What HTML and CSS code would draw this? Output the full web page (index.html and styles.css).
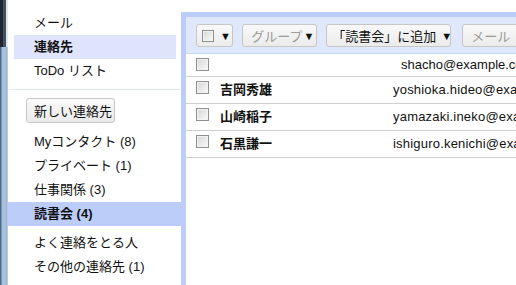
FILE: index.html
```html
<!DOCTYPE html>
<html lang="ja">
<head>
<meta charset="utf-8">
<title>連絡先</title>
<link rel="stylesheet" href="styles.css">
</head>
<body>
<div class="app">
  <div class="strip"><div class="strip-top"></div></div>
  <aside class="sidebar">
    <ul class="nav">
      <li class="nav-item">メール</li>
      <li class="nav-item is-active">連絡先</li>
      <li class="nav-item">ToDo リスト</li>
    </ul>
    <div class="sep"></div>
    <button class="btn btn-new" type="button">新しい連絡先</button>
    <ul class="groups">
      <li class="group-item">Myコンタクト (8)</li>
      <li class="group-item">プライベート (1)</li>
      <li class="group-item">仕事関係 (3)</li>
      <li class="group-item is-active">読書会 (4)</li>
    </ul>
    <ul class="groups groups-system">
      <li class="group-item">よく連絡をとる人</li>
      <li class="group-item">その他の連絡先 (1)</li>
    </ul>
  </aside>
  <main class="panel">
    <div class="toolbar">
      <button class="btn btn-select" type="button"><span class="cb"></span><span class="caret">▼</span></button>
      <button class="btn btn-group" type="button"><span class="disabled">グループ</span><span class="caret">▼</span></button>
      <button class="btn btn-add" type="button">「読書会」に追加<span class="caret caret-gap">▼</span></button>
      <button class="btn btn-mail disabled" type="button">メール</button>
    </div>
    <div class="list">
      <div class="row"><span class="cb row-cb"></span><span class="name"></span><span class="email email-self">shacho@example.com</span></div>
      <div class="row"><span class="cb row-cb"></span><span class="name">吉岡秀雄</span><span class="email">yoshioka.hideo@example.com</span></div>
      <div class="row"><span class="cb row-cb"></span><span class="name">山崎稲子</span><span class="email">yamazaki.ineko@example.com</span></div>
      <div class="row"><span class="cb row-cb"></span><span class="name">石黒謙一</span><span class="email">ishiguro.kenichi@example.com</span></div>
    </div>
  </main>
</div>
</body>
</html>
```
FILE: styles.css
```css
* { box-sizing: border-box; }
html, body { margin: 0; padding: 0; }
body {
  background: #fff;
  color: #111;
  font-family: "Liberation Sans", "Noto Sans CJK JP", sans-serif;
  font-size: 13px;
  overflow: hidden;
}
ul { list-style: none; margin: 0; padding: 0; }

.app {
  display: flex;
  height: 285px;
  overflow: hidden;
}

.strip {
  flex: none;
  width: 8px;
  background: linear-gradient(90deg, #4d6a88 0, #4d6a88 1px, #a5bfdc 2px, #a9c3df 6px, #8eaacb 7px, #dfe7ef 8px);
}
.strip-top {
  height: 47px;
  background: linear-gradient(90deg, #1d2733 0, #1d2733 3px, #46525f 3px, #46525f 6px, #d5dbe2 6px, #eef1f4 8px);
}

.sidebar {
  flex: none;
  width: 173px;
  padding-top: 11px;
}
.nav-item {
  height: 24px;
  line-height: 24px;
  margin: 0 5px 0 6px;
  padding-left: 20px;
  white-space: nowrap;
}
.nav-item.is-active {
  background: #dde4fb;
  font-weight: bold;
}
.sep {
  height: 1px;
  margin: 6px 1px 0 1px;
  background: #dfe7f1;
}
.btn {
  font-family: inherit;
  font-size: 13px;
  color: #111;
  height: 23px;
  padding: 0 8px;
  border: 1px solid #c6c6c6;
  border-radius: 3px;
  background: linear-gradient(#f9f9f9, #ebebeb);
  display: inline-flex;
  align-items: center;
  white-space: nowrap;
  cursor: default;
}
.btn-new {
  margin: 8px 0 0 18px;
  height: 25px;
  width: 89px;
  padding: 0 7px;
}
.groups { margin-top: 7px; }
.groups-system { margin-top: 5px; }
.group-item {
  height: 24px;
  line-height: 24px;
  padding-left: 26px;
  white-space: nowrap;
}
.group-item.is-active {
  background: #bccdfa;
  font-weight: bold;
}

.panel {
  flex: none;
  width: 340px;
  margin-top: 12px;
  border-top: 5px solid #bccdfa;
  border-left: 5px solid #bccdfa;
  background: #fff;
}
.toolbar {
  height: 37px;
  background: #e0e8fb;
  border-bottom: 1px solid #c6d3f3;
  display: flex;
  align-items: flex-start;
  gap: 9px;
  padding: 7px 0 0 10px;
}
.btn-select { width: 38px; padding: 0 0 0 5px; }
.btn-group { width: 75px; }
.btn-add { width: 125px; padding: 0 0 0 5px; }
.btn-mail { width: 60px; margin-left: 2px; }
.disabled { color: #9a9a9a; }
.caret {
  font-size: 11px;
  color: #111;
  margin-left: 1px;
}
.caret-gap { margin-left: 5px; }
.btn-select .caret { margin-left: 6px; }

.cb {
  display: inline-block;
  flex: none;
  width: 13px;
  height: 13px;
  border: 1px solid #8f8f8f;
  box-shadow: inset 0 0 0 1px #f3f3f3;
  background: linear-gradient(135deg, #d6d6d6, #fbfbfb);
}
.btn-select .cb { width: 12px; height: 12px; }

.row {
  display: flex;
  align-items: center;
  border-bottom: 1px solid #cfcfcf;
  white-space: nowrap;
}
.row-cb {
  align-self: flex-start;
  margin: 4px 0 0 10px;
}
.name {
  flex: none;
  width: 173px;
  margin-left: 11px;
  line-height: 26px;
  font-weight: bold;
}
.email {
  line-height: 22px;
  letter-spacing: 0.2px;
}
.email-self { padding-left: 8px; letter-spacing: 0; }
```
